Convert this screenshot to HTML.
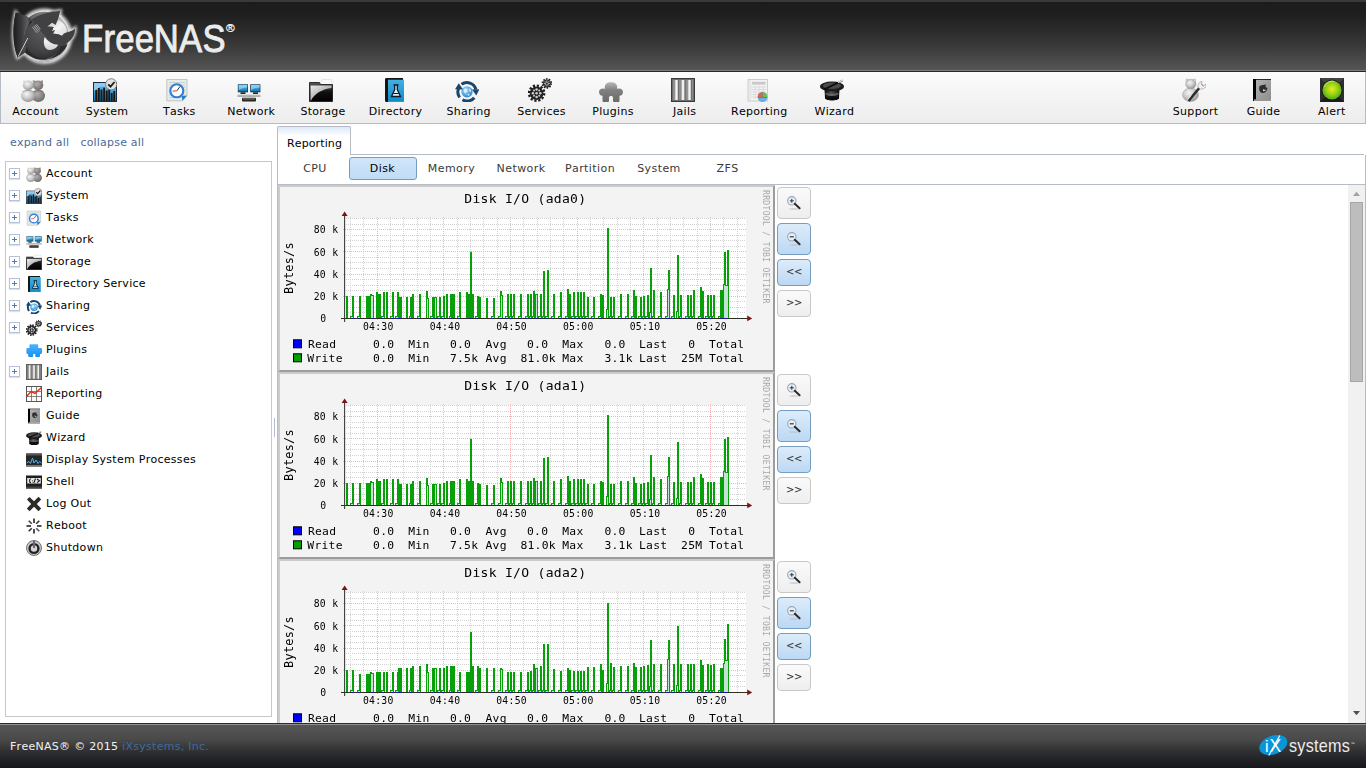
<!DOCTYPE html>
<html lang="en">
<head>
<meta charset="utf-8">
<title>FreeNAS - Reporting</title>
<style>
html,body{margin:0;padding:0;}
body{width:1366px;height:768px;overflow:hidden;background:#fff;position:relative;
 font-family:"DejaVu Sans","Liberation Sans",sans-serif;font-size:11px;color:#000;letter-spacing:0.28px;font-kerning:none;}
.abs{position:absolute;}
#hdr{left:0;top:0;width:1366px;height:70px;background:linear-gradient(#1b1b1b 0,#1f1f1f 22%,#353535 60%,#565555 100%);}
#hdrtop{left:0;top:0;width:1366px;height:2px;background:#3a3a3a;}
#hdrline{left:0;top:70px;width:1366px;height:1px;background:#7c7c7c;}
#hdrline2{left:0;top:71px;width:1366px;height:1px;background:#262626;}
#tb{left:0;top:72px;width:1364px;height:51px;border:1px solid #b5bcc7;border-top:none;background:linear-gradient(#fbfbfb,#f4f4f4 50%,#ededed);}
.tbi{position:absolute;top:72px;height:52px;width:100px;margin-left:-50px;text-align:center;}
.tbi svg{position:absolute;left:50%;margin-left:-12px;top:6px;width:24px;height:24px;}
.tbi span{position:absolute;left:0;width:100px;top:33px;font-size:11px;line-height:14px;color:#000;}
#links{left:10px;top:136px;letter-spacing:0.2px;font-size:11px;line-height:14px;color:#4a6b9a;white-space:pre;}
#tree{left:5px;top:161px;width:265px;height:554px;border:1px solid #c8c8c8;background:#fff;}
.tr{position:absolute;left:0;height:22px;width:260px;}
.tr .ex{position:absolute;left:3px;top:6px;width:9px;height:9px;border:1px solid #b7c2d6;background:#fff;box-shadow:0 1px 1px rgba(120,140,180,.25);}
.tr .ex:before{content:"";position:absolute;left:2px;top:4px;width:5px;height:1px;background:#5b78ad;}
.tr .ex:after{content:"";position:absolute;left:4px;top:2px;width:1px;height:5px;background:#5b78ad;}
.tr svg{position:absolute;left:20px;top:4px;width:16px;height:16px;}
.tr span{position:absolute;left:40px;top:5px;line-height:14px;font-size:11px;white-space:nowrap;}
#split{left:274px;top:418px;width:1px;height:19px;background:#b3bdd1;}
#tabline{left:277px;top:154px;width:1087px;height:1px;background:#b5bcc7;}
#tabbox{left:277px;top:155px;width:1087px;height:568px;border-left:1px solid #b5bcc7;border-right:1px solid #b5bcc7;}
#tab{left:277px;top:126px;width:72px;height:28px;border:1px solid #b5bcc7;border-bottom:none;background:linear-gradient(#dbe9f8 0,#fff 9px);border-radius:2px 2px 0 0;}
#tab span{position:absolute;left:9px;top:10px;line-height:14px;font-size:11px;letter-spacing:0.12px;}
#subline{left:278px;top:184px;width:1087px;height:1px;background:#b5bcc7;}
.st{position:absolute;top:162px;line-height:14px;font-size:11px;letter-spacing:0.42px;color:#3a3a3a;width:80px;margin-left:-40px;text-align:center;}
#disk{left:349px;top:157px;width:66px;height:21px;border:1px solid #759dc0;border-radius:3px;background:linear-gradient(#cfe5fa,#c2dcf5);}
#content{left:278px;top:185px;width:1070px;height:538px;overflow:hidden;background:#fff;}
#sb{left:1348px;top:185px;width:17px;height:538px;background:#f1f1f1;}
#sbthumb{left:1350px;top:202px;width:13px;height:180px;background:#bdbdbd;border:1px solid #a6a6a6;box-sizing:border-box;}
#ftr{left:0;top:725px;width:1366px;height:43px;background:linear-gradient(#565656 0,#4b4a4a 33%,#353536 55%,#212327 80%,#15171b 100%);}
#ftrline{left:0;top:723px;width:1366px;height:1px;background:#2b2b2b;border-bottom:1px solid #8f8f8f;}
#ftrtxt{left:10px;top:739.5px;font-size:11px;line-height:14px;color:#f2f2f2;white-space:pre;}
#ftrtxt b{font-weight:normal;color:#3d6aa0;}
.g{position:absolute;left:0;width:497px;height:187px;will-change:transform;}
.zb{position:absolute;left:499px;width:30px;letter-spacing:-0.3px;border:1px solid #c8c8c8;border-radius:4px;background:linear-gradient(#fafafa,#eee);box-sizing:border-box;text-align:center;font-size:10px;color:#333;}
.zb.sel{border-color:#759dc0;background:linear-gradient(#dcecfa,#bcd8f4);}
</style>
</head>
<body>
<svg width="0" height="0" style="position:absolute">
<defs>
 <radialGradient id="gLt" cx="0.4" cy="0.35" r="0.7"><stop offset="0" stop-color="#f6f6f6"/><stop offset="0.55" stop-color="#c6c6c6"/><stop offset="1" stop-color="#8c8c8c"/></radialGradient>
 <radialGradient id="gDk" cx="0.4" cy="0.35" r="0.7"><stop offset="0" stop-color="#b5b0b0"/><stop offset="0.6" stop-color="#8a8585"/><stop offset="1" stop-color="#6a6666"/></radialGradient>
 <linearGradient id="gBlue" x1="0" y1="0" x2="0" y2="1"><stop offset="0" stop-color="#6fc3ee"/><stop offset="1" stop-color="#0b78b8"/></linearGradient>
 <linearGradient id="gFold" x1="0" y1="0" x2="0" y2="1"><stop offset="0" stop-color="#5a5a5a"/><stop offset="0.5" stop-color="#111"/><stop offset="1" stop-color="#000"/></linearGradient>
 <linearGradient id="gGloss" x1="0" y1="0" x2="1" y2="1"><stop offset="0" stop-color="#f4f4f4"/><stop offset="1" stop-color="#8c8c8c"/></linearGradient>
 <linearGradient id="gPlug" x1="0" y1="0" x2="0" y2="1"><stop offset="0" stop-color="#b8b8b8"/><stop offset="0.4" stop-color="#808080"/><stop offset="1" stop-color="#6a6a6a"/></linearGradient>
 <linearGradient id="gPlugB" x1="0" y1="0" x2="0" y2="1"><stop offset="0" stop-color="#4db4ff"/><stop offset="1" stop-color="#1590f0"/></linearGradient>
 <linearGradient id="gHat" x1="0" y1="0" x2="1" y2="0"><stop offset="0" stop-color="#000"/><stop offset="0.45" stop-color="#555"/><stop offset="1" stop-color="#000"/></linearGradient>
 <radialGradient id="gGrn" cx="0.5" cy="0.45" r="0.55"><stop offset="0" stop-color="#e3ee1c"/><stop offset="0.5" stop-color="#9fd415"/><stop offset="1" stop-color="#4fae12"/></radialGradient>
 <radialGradient id="gGlobe" cx="0.4" cy="0.35" r="0.7"><stop offset="0" stop-color="#a8dcff"/><stop offset="1" stop-color="#1f86d0"/></radialGradient>
 <linearGradient id="gBar" x1="0" y1="0" x2="1" y2="0"><stop offset="0" stop-color="#777"/><stop offset="0.5" stop-color="#f2f2f2"/><stop offset="1" stop-color="#888"/></linearGradient>

 <symbol id="i-account" viewBox="0 0 24 24">
  <ellipse cx="17.300" cy="17.800" rx="6.700" ry="6.200" fill="url(#gDk)"/><ellipse cx="17" cy="7.300" rx="5.300" ry="4.800" fill="url(#gDk)"/><path d="M12,5.500 l0.300,-3.500 l3.200,1.500z M22,5.500 l-0.300,-3.500 l-3.200,1.500z" fill="#8f8989"/>
  <ellipse cx="7" cy="17.800" rx="7" ry="6.200" fill="url(#gLt)"/><ellipse cx="7.300" cy="7.300" rx="5.500" ry="4.800" fill="url(#gLt)"/><path d="M2.200,5.500 l0.300,-3.500 l3.200,1.500z M12.400,5.500 l-0.300,-3.500 l-3.200,1.500z" fill="#d9d9d9"/>
  <path d="M1.500,13.800 C4.500,12 9.500,12 12.500,13.800" stroke="#8f8f8f" stroke-width="0.700" fill="none"/><path d="M12.500,13.800 C15,12.200 19.500,12.200 22.500,13.800" stroke="#6d6868" stroke-width="0.700" fill="none"/>
 </symbol>
 <symbol id="i-system" viewBox="0 0 24 24">
  <rect x="0.500" y="4.500" width="23" height="19" fill="url(#gBlue)" stroke="#1b2a3c" stroke-width="1"/>
  <path d="M1,13 L8,8 L14,10 L23,6 L23,5 L1,5Z" fill="#9fd0f2" opacity="0.800"/>
  <g fill="#1d1512"><rect x="2.300" y="12" width="2" height="11"/><rect x="5" y="10" width="1.800" height="13"/><rect x="7.500" y="11.500" width="2" height="11.500"/><rect x="10.200" y="9.500" width="1.800" height="13.500"/><rect x="12.700" y="12.500" width="2" height="10.500"/><rect x="15.300" y="11" width="1.800" height="12"/><rect x="17.800" y="15" width="1.800" height="8"/><rect x="20.300" y="13" width="1.800" height="10"/></g>
  <circle cx="18.200" cy="6.300" r="5.600" fill="#e2e2e2" stroke="#777" stroke-width="0.900"/>
  <path d="M15.200,6.300 L17.500,8.600 L21.500,4" stroke="#1a1a1a" stroke-width="1.800" fill="none"/>
 </symbol>
 <symbol id="i-tasks" viewBox="0 0 24 24">
  <path d="M1.800,1.500 H22 V18 L17.500,22.800 H1.800Z" fill="#e6ece8" stroke="#b4bcb6" stroke-width="0.800"/>
  <g stroke="#bfc7c1" stroke-width="0.700"><path d="M4,4.500H20M4,7H20M4,9.500H20M4,12H20M4,14.500H20M4,17H20M4,19.500H16"/></g>
  <path d="M22,17.500 L17.500,22.800 L16.500,18Z" fill="#2a7bd0"/>
  <circle cx="11.800" cy="12.800" r="6.500" fill="#fff" stroke="#2f7fd6" stroke-width="2.100"/>
  <path d="M11.800,12.800 L15,8.500" stroke="#333" stroke-width="1"/><path d="M11.800,12.800 L7.500,13.200" stroke="#d33" stroke-width="1"/>
 </symbol>
 <symbol id="i-network" viewBox="0 0 24 24">
  <rect x="0.800" y="6.300" width="10.200" height="8" fill="#16405c"/><rect x="1.600" y="7" width="8.600" height="6.200" fill="url(#gBlue)"/>
  <rect x="13.200" y="6.300" width="10.200" height="8" fill="#16405c"/><rect x="14" y="7" width="8.600" height="6.200" fill="url(#gBlue)"/>
  <path d="M1.600,7 h8.600 v2.500 c-3,0 -6,1 -8.600,2.500z M14,7 h8.600 v2.500 c-3,0 -6,1 -8.600,2.500z" fill="#9ad8f7" opacity="0.700"/>
  <rect x="3.500" y="14.300" width="5" height="1.700" fill="#2a2a2a"/><rect x="16" y="14.300" width="5" height="1.700" fill="#2a2a2a"/>
  <rect x="0.500" y="16.500" width="23" height="1.200" fill="#c9c9c9"/><rect x="0.500" y="17.700" width="23" height="0.800" fill="#6a6a6a"/>
  <rect x="5" y="19.800" width="14" height="3.700" rx="0.800" fill="#262626"/><rect x="6" y="20.500" width="12" height="0.900" fill="#8f8f70"/>
 </symbol>
 <symbol id="i-storage" viewBox="0 0 24 24">
  <path d="M12,5 L13,1.500 H22.500 L23,7 H12Z" fill="#fafafa" stroke="#cfcfcf" stroke-width="0.500"/>
  <path d="M0.500,4.500 H10.500 L11.500,6.500 H23.500 V23.500 H0.500Z" fill="url(#gFold)" stroke="#111" stroke-width="0.800"/>
  <path d="M1.500,7.500 H22.500 V10 C14,11 6,15 2,22.500 H1.500Z" fill="url(#gGloss)" opacity="0.950"/>
 </symbol>
 <symbol id="i-directory" viewBox="0 0 24 24">
  <path d="M3,1.500 C3,0.600 3.600,0 4.500,0 H21 V2 H6 V24 H4.500 C3.600,24 3,23.400 3,22.500Z" fill="#151515"/>
  <rect x="6" y="1.800" width="16" height="22" fill="#159cd6"/><rect x="6" y="1.800" width="16" height="22" fill="url(#gBlue)" opacity="0.500"/>
  <path d="M11.500,7 H16.500 M12.700,7 V11.500 L9.500,18.500 H18.500 L15.300,11.500 V7" stroke="#0c1a24" stroke-width="1.300" fill="#d9f1ff"/>
  <path d="M11.300,15.500 H16.700" stroke="#0c1a24" stroke-width="1"/>
 </symbol>
 <symbol id="i-sharing" viewBox="0 0 24 24">
  <circle cx="12" cy="13.800" r="5.600" fill="url(#gGlobe)"/>
  <path d="M8.800,11.500 c1.500,-1.500 3,-1 3.500,0.500 c0.500,1.500 -1,2 -1.500,3.500 c-1.500,-0.500 -2.500,-2 -2,-4z M14,10.500 c1.500,0.500 2.500,2 2,3.500 c-1,0 -2,-1.500 -2,-3.500z M12.500,16.300 c1,-0.500 2,0 2,1 c-0.800,0.800 -1.800,0.600 -2,-1z" fill="#e8f6ff" opacity="0.850"/>
  <path d="M4.600,19.500 A9.300,9.300 0 0 1 3.600,10.500" stroke="#1b466c" stroke-width="3" fill="none"/>
  <path d="M0,11.300 L3.800,5.300 L8,11.500Z" fill="#1b466c"/>
  <path d="M6.500,6.300 A9.300,9.300 0 0 1 20.900,11.500" stroke="#1b466c" stroke-width="3" fill="none"/>
  <path d="M17,11.500 L24.400,11.200 L21.300,17.600Z" fill="#1b466c"/>
  <path d="M19.300,19.700 A9.300,9.300 0 0 1 7.500,21.800" stroke="#1b466c" stroke-width="3" fill="none"/>
 </symbol>
 <symbol id="i-services" viewBox="0 0 24 24">
  <circle cx="8.600" cy="15.200" r="7.600" fill="none" stroke="#1b1b1b" stroke-width="2.400" stroke-dasharray="2.200 1.779"/>
  <circle cx="8.600" cy="15.200" r="6.800" fill="#222"/>
  <g fill="#cfcfcf"><circle cx="8.600" cy="15.200" r="1.300"/><circle cx="8.600" cy="11.500" r="1.250"/><circle cx="8.600" cy="18.900" r="1.250"/><circle cx="4.900" cy="15.200" r="1.250"/><circle cx="12.300" cy="15.200" r="1.250"/><circle cx="6" cy="12.600" r="1"/><circle cx="11.200" cy="12.600" r="1"/><circle cx="6" cy="17.800" r="1"/><circle cx="11.200" cy="17.800" r="1"/></g>
  <circle cx="18.900" cy="5.400" r="4.500" fill="none" stroke="#1b1b1b" stroke-width="1.600" stroke-dasharray="1.500 1.327"/>
  <circle cx="18.900" cy="5.400" r="4" fill="#2a2a2a"/>
  <g stroke="#d6d6d6" stroke-width="0.850"><path d="M18.900,2.400V8.400M15.900,5.400H21.900M16.800,3.300L21,7.500M21,3.300L16.800,7.500"/></g>
  <circle cx="18.900" cy="5.400" r="1" fill="#2a2a2a"/>
 </symbol>
 <symbol id="i-plugins" viewBox="0 0 24 24">
  <path d="M6,11 C5,6 8,4.200 12,4.200 C16,4.200 19,6 18,11 C21,9.800 24,11 24,14 C24,17 21.500,18 20.500,17.800 V22.500 C20.500,23.500 20,24 19,24 H15.500 C14.500,24 14,23.500 14,22.500 V19.500 C14,17.500 10,17.500 10,19.500 V22.500 C10,23.500 9.500,24 8.500,24 H5 C4,24 3.500,23.500 3.500,22.500 V17.800 C2.500,18 0,17 0,14 C0,11 3,9.800 6,11Z" fill="url(#gPlug)"/>
 </symbol>
 <symbol id="i-pluginsb" viewBox="0 0 16 16">
  <path d="M4.400,2.300 H11.200 Q12.200,2.300 12.200,3.300 V6.100 H14.800 Q16,6.100 16,7.300 V10.800 Q16,12 14.800,12 H14 V14 Q14,15 13,15 H10.200 Q9.200,15 9.200,14 V12 H7.200 V14 Q7.200,15 6.200,15 H3.200 Q2.200,15 2.200,14 V12 H1.600 Q0.400,12 0.400,10.800 V7.300 Q0.400,6.100 1.600,6.100 H3.400 V3.300 Q3.400,2.300 4.400,2.300Z" fill="url(#gPlugB)"/>
 </symbol>
 <symbol id="i-jails" viewBox="0 0 24 24">
  <rect x="0.500" y="0.500" width="23" height="23" fill="#8c8c8c" stroke="#3a3a3a" stroke-width="1"/>
  <rect x="1.500" y="1.500" width="21" height="21" fill="none" stroke="#6d6d6d" stroke-width="1"/>
  <rect x="3.800" y="2" width="3.400" height="20" fill="#b9b9b9"/><rect x="4.600" y="2" width="1.800" height="20" fill="#f6f6f6"/>
  <rect x="10.300" y="2" width="3.400" height="20" fill="#b9b9b9"/><rect x="11.100" y="2" width="1.800" height="20" fill="#f6f6f6"/>
  <rect x="16.800" y="2" width="3.400" height="20" fill="#b9b9b9"/><rect x="17.600" y="2" width="1.800" height="20" fill="#f6f6f6"/>
  <rect x="7.200" y="2" width="0.800" height="20" fill="#666"/><rect x="13.700" y="2" width="0.800" height="20" fill="#666"/><rect x="20.200" y="2" width="0.800" height="20" fill="#666"/>
 </symbol>
 <symbol id="i-reporting" viewBox="0 0 24 24">
  <rect x="3" y="1.500" width="19.500" height="21.500" fill="#f2f2f2" stroke="#c4c4c4" stroke-width="0.800"/>
  <rect x="7" y="3.800" width="13.500" height="2.800" fill="#c9c9c9"/>
  <g stroke="#d4d4d4" stroke-width="0.700"><path d="M6,9H21M6,11.500H21M6,14H21M6,16.500H21M6,19H21M10,8V21M14,8V21M18,8V21M5,2V22.500"/></g>
  <circle cx="17.500" cy="19" r="4.800" fill="#2a8be0"/>
  <path d="M17.500,19 L17.500,14.200 A4.800,4.800 0 0 1 22.300,19Z" fill="#6cc04a"/>
  <path d="M17.500,19 L12.700,19 A4.800,4.800 0 0 1 17.500,14.200Z" fill="#e8623a"/>
  <path d="M12.900,20 A4.800,4.800 0 0 0 22.100,20Z" fill="#8ec9f5" opacity="0.600"/>
 </symbol>
 <symbol id="i-wizard" viewBox="0 0 24 24">
  <path d="M4.500,10 L5,20 C7,23 17,23 19,20 L19.500,10Z" fill="url(#gHat)"/>
  <ellipse cx="12" cy="20.300" rx="7" ry="2.200" fill="#0c0c0c"/>
  <ellipse cx="12" cy="8.500" rx="12" ry="5" fill="#1c1c1c"/>
  <ellipse cx="12" cy="7.800" rx="9" ry="3.200" fill="#4a4a4a"/>
  <path d="M4,11.500 L22.500,2.500" stroke="#0a0a0a" stroke-width="1.800"/><path d="M18,4.500 L23.300,1.900" stroke="#e0e0e0" stroke-width="1.500"/>
  <path d="M5.500,14.500 C9,16.200 15,16.200 18.500,14.500 V16.500 C15,18.200 9,18.200 5.500,16.500Z" fill="#777" opacity="0.700"/>
 </symbol>
 <symbol id="i-support" viewBox="0 0 24 24">
  <ellipse cx="8.500" cy="16.800" rx="8" ry="6.800" fill="url(#gLt)" stroke="#9a9a9a" stroke-width="0.500"/><ellipse cx="8.800" cy="6" rx="5.200" ry="4.800" fill="url(#gLt)" stroke="#9a9a9a" stroke-width="0.500"/>
  <path d="M4,4 l0.300,-3.200 l3,1.400z M13.600,4 l-0.300,-3.200 l-3,1.400z" fill="#cfcfcf" stroke="#9a9a9a" stroke-width="0.400"/>
  <path d="M6.500,23 L18.500,8.500" stroke="#2b2b2b" stroke-width="2.600"/>
  <path d="M16.500,10 C15,7 17,4 20,3.500 L19.500,6.300 L21.500,7.800 L24,6 C24.500,9.500 21.500,11.500 18.500,11Z" fill="#f1f1f1" stroke="#8d8d8d" stroke-width="0.600"/>
  <path d="M19.500,6.300 L21.500,7.800" stroke="#c33" stroke-width="0.800"/>
  <path d="M5,22.500 L9,17.500" stroke="#fff" stroke-width="0.800"/>
 </symbol>
 <symbol id="i-guide" viewBox="0 0 24 24">
  <rect x="3" y="1" width="18" height="22" fill="#000"/>
  <rect x="6" y="1.800" width="15" height="19.700" fill="#8e8e8e"/><rect x="6" y="1.800" width="15" height="19.700" fill="url(#gGloss)" opacity="0.350"/>
  <rect x="4" y="21.500" width="17" height="1.200" fill="#d8d8d8"/>
  <path d="M9.500,8 C11,7 14,7 16,6.500 L15.500,9 L17.500,10 C17,13 15,15 12.500,15 C10,15 8.500,12 9.500,8Z" fill="#2e2e2e"/>
  <path d="M13,11 C14,12 15,12 16,11.500 C15.500,13 14,13.500 13,13Z" fill="#ddd"/>
 </symbol>
 <symbol id="i-alert" viewBox="0 0 24 24">
  <rect x="0" y="0" width="24" height="24" fill="#2e2e2e"/>
  <path d="M0,0 H24 L20,4 H4Z" fill="#444"/><path d="M0,24 H24 L20,20 H4Z" fill="#1c1c1c"/>
  <circle cx="12" cy="12" r="10.300" fill="#151515"/>
  <circle cx="12" cy="12" r="9.600" fill="url(#gGrn)"/>
  <path d="M4.500,9 C6,4.500 10,2.800 14,3.300" stroke="#e6f5a0" stroke-width="1" fill="none" opacity="0.700"/>
 </symbol>
 <symbol id="i-report2" viewBox="0 0 16 16">
  <rect x="0.500" y="0.500" width="15" height="15" fill="#fdfdfd" stroke="#555" stroke-width="1"/>
  <g stroke="#666" stroke-width="0.800"><path d="M0.500,5.500H15.500M0.500,10.500H15.500M5.500,0.500V15.500M10.500,0.500V15.500"/></g>
  <path d="M0.500,10.500 L5,5.500 L9,7.500 L15.500,1.500" stroke="#e02b10" stroke-width="1.400" fill="none"/>
 </symbol>
 <symbol id="i-procs" viewBox="0 0 16 16">
  <rect x="0" y="1.500" width="16" height="13" fill="#262626"/><rect x="0" y="1.500" width="16" height="2" fill="#555"/>
  <path d="M0.500,11 L3,9.500 L4.500,11.500 L6.500,6 L8,11 L10,8 L12,11.500 L13.500,9.500 L15.500,11" stroke="#53b4f0" stroke-width="1" fill="none"/>
  <rect x="0" y="13" width="16" height="1.500" fill="#777"/>
 </symbol>
 <symbol id="i-shell" viewBox="0 0 16 16">
  <rect x="0" y="1.500" width="16" height="13" fill="#1e1e1e"/>
  <rect x="1.200" y="4" width="13.600" height="5.500" fill="#e6e6e6"/>
  <path d="M5,4.800 C3,4.800 3,8.700 5,8.700 M6.500,6 V6.600 M6.500,7.700 V8.300 M9.500,4.500 L7.800,9 M11,5 L13.500,6.800 L11,8.600" stroke="#1e1e1e" stroke-width="1.100" fill="none"/>
  <rect x="0" y="12.500" width="16" height="2" fill="#444"/>
 </symbol>
 <symbol id="i-logout" viewBox="0 0 16 16">
  <path d="M1,3.500 L3.500,1 L8,5.200 L12.500,0.800 L15.200,3.500 L10.800,8 L15.200,12.500 L12.500,15.200 L8,10.800 L3.500,15.200 L0.800,12.500 L5.200,8Z" fill="#2b2b2b"/>
 </symbol>
 <symbol id="i-reboot" viewBox="0 0 16 16">
  <g stroke-width="1.600" stroke-linecap="butt"><path d="M8,0.500V5" stroke="#222"/><path d="M13.300,2.700L10.200,5.800" stroke="#333"/><path d="M15.500,8H11" stroke="#222"/><path d="M13.300,13.300L10.200,10.200" stroke="#555"/><path d="M8,15.500V11" stroke="#222"/><path d="M2.700,13.300L5.800,10.200" stroke="#333"/><path d="M0.500,8H5" stroke="#222"/><path d="M2.700,2.700L5.800,5.800" stroke="#444"/></g>
 </symbol>
 <symbol id="i-shutdown" viewBox="0 0 16 16">
  <circle cx="8" cy="8" r="7.500" fill="#c9c9c9" stroke="#555" stroke-width="0.800"/>
  <circle cx="8" cy="8.500" r="5.600" fill="#222"/>
  <circle cx="8" cy="8.500" r="3.200" fill="#d6d6d6"/>
  <rect x="7" y="1.800" width="2" height="6" fill="#d6d6d6"/><rect x="7.400" y="1" width="1.200" height="7" fill="#222"/>
 </symbol>
</defs>
</svg>
<div id="hdr" class="abs"></div><div id="hdrtop" class="abs"></div><div id="hdrline" class="abs"></div><div id="hdrline2" class="abs"></div>
<svg class="abs" style="left:0;top:0" width="260" height="72" viewBox="0 0 260 72">
 <defs>
  <radialGradient id="lgSph" cx="0.68" cy="0.38" r="0.6">
   <stop offset="0" stop-color="#fafafa"/><stop offset="0.3" stop-color="#cfcfcf"/><stop offset="0.65" stop-color="#808083"/><stop offset="1" stop-color="#4a4a4c"/>
  </radialGradient>
  <radialGradient id="lgBody" cx="0.45" cy="0.35" r="0.7">
   <stop offset="0" stop-color="#5a5a5d"/><stop offset="0.7" stop-color="#424245"/><stop offset="1" stop-color="#2c2c2e"/>
  </radialGradient>
  <linearGradient id="lgBelly" x1="0" y1="0" x2="0" y2="1"><stop offset="0" stop-color="#ffffff"/><stop offset="1" stop-color="#cfcfcf"/></linearGradient>
  <linearGradient id="lgFin" x1="0" y1="0" x2="1" y2="0"><stop offset="0" stop-color="#1c1c1e"/><stop offset="0.45" stop-color="#3a3a3c"/><stop offset="0.8" stop-color="#5c5c5f"/><stop offset="1" stop-color="#2a2a2c"/></linearGradient>
  <linearGradient id="lgMouth" x1="0" y1="0" x2="1" y2="1"><stop offset="0" stop-color="#b9b9b9"/><stop offset="0.5" stop-color="#f4f4f4"/><stop offset="1" stop-color="#d8d8d8"/></linearGradient>
  <filter id="lgGlow" x="-30%" y="-30%" width="160%" height="160%"><feGaussianBlur stdDeviation="1.6"/></filter>
 </defs>
 <g filter="url(#lgGlow)" opacity="0.9">
  <circle cx="44.500" cy="36.200" r="26" fill="none" stroke="#fff" stroke-width="3.200"/>
  <path d="M15.700,12.500 C12.500,26 12.500,44 17.600,57.600 L24.500,52 C21,44 21,28 31,19.500 C38,14 50,11.500 60.400,10.700 L57.700,20 C62,24 64,29 66.500,32.500 C70,31.500 73.500,30 75,28.400 C75.500,35 71,41 66,43.500 L67,45.500 C60,56 50,59 45,59Z" fill="none" stroke="#fff" stroke-width="3"/>
 </g>
 <circle cx="44.500" cy="36.200" r="25.500" fill="url(#lgSph)"/>
 <circle cx="44.500" cy="36.200" r="25" fill="none" stroke="#f0f0f0" stroke-width="1.200" opacity="0.850"/>
 <path d="M15.700,12.500 C12.500,26 12.500,44 17.600,57.600 L25,52.500 C31,58 40,60.500 47,59.500 L47,50 L31,19.500 C26,15.500 21,13.500 15.700,12.500Z" fill="#29292b"/>
 <path d="M15.700,12.500 C12.500,26 12.500,44 17.600,57.600 L25,52.500 L28,40 L27,28 L31,19.500 C26,15.500 21,13.500 15.700,12.500Z" fill="url(#lgFin)"/>
 <circle cx="44" cy="38.200" r="20" fill="url(#lgBody)"/>
 <path d="M24.300,35 C25,28 27.500,23 31,19.500" stroke="#6a6a6d" stroke-width="0.800" fill="none" opacity="0.700"/>
 <path d="M57.700,20 L55.500,24.800 L52,22.500 L47.200,26.600 L53.600,27 L51.800,31.200 L55,30 L52.700,33.900 C57,33.500 60,35 62,36 L64,33.500 L66.500,32.500 C68,29 64,22 57.700,20Z" fill="url(#lgMouth)"/>
 <path d="M31,19.500 C38,14 50,11.500 60.400,10.700 L57.700,20 L55.500,24.800 L52,22.500 L47.200,26.600 L53.600,27 L51.800,31.200 L55,30 L52.700,33.900 C57,33.500 60,35 62,36 L64,33.500 L66.500,32.500 C70,31.500 73.500,30 75,28.400 C75.500,35 71,41 66,43.500 L67.200,45 C63,47 58,46.500 54,44 C46,38 38,28 31,19.500Z" fill="#414144"/>
 <path d="M31,19.500 C38,14 50,11.500 60.400,10.700" stroke="#6e6e72" stroke-width="0.700" fill="none"/>
 <path d="M67.200,45 C64,52 57,57.500 49,59 C57,55 60,50 60.500,46.500Z" fill="#2c2c2e"/>
 <path d="M44.800,37 C48,42 53,44.500 58.200,44.800 C56.500,48.500 53,50.300 49,49.900 C44.500,49.300 42.500,43 44.800,37Z" fill="url(#lgBelly)"/>
 <path d="M27.800,38 L18.200,56.600" stroke="#dcdcdc" stroke-width="0.900" fill="none"/>
 <path d="M27,56 C32,59.500 40,61 47,60 C52,59.300 56,57.800 59,55.500" stroke="#d0d0d0" stroke-width="1" fill="none" opacity="0.850"/>
 <g stroke="#c4c4c4" stroke-width="0.700" fill="none"><path d="M32.400,27 L37,32.800"/><path d="M33.800,26 L38.400,31.800"/><path d="M35.200,25 L39.600,30.600"/><path d="M36.500,24.200 L40.400,29.300"/></g>
 <g font-family="'Liberation Sans','DejaVu Sans',sans-serif" fill="#ececec" stroke="#ececec">
 <text x="82" y="52" font-size="39.500" stroke-width="0.900" textLength="72.400" lengthAdjust="spacingAndGlyphs">Free</text>
 <text x="153.800" y="52" font-size="39.500" stroke-width="0.900" textLength="72" lengthAdjust="spacingAndGlyphs">NAS</text>
 <text x="226" y="32.400" font-size="11.800" stroke-width="0.300">®</text>
 </g>
</svg>
<div id="tb" class="abs"></div>
<div class="tbi" style="left:35.5px"><svg style="margin-left:-15px"><use href="#i-account"/></svg><span>Account</span></div>
<div class="tbi" style="left:107px"><svg style="margin-left:-14px"><use href="#i-system"/></svg><span>System</span></div>
<div class="tbi" style="left:179.3px"><svg style="margin-left:-14px"><use href="#i-tasks"/></svg><span>Tasks</span></div>
<div class="tbi" style="left:251.2px"><svg style="margin-left:-14px"><use href="#i-network"/></svg><span>Network</span></div>
<div class="tbi" style="left:323px"><svg style="margin-left:-14px"><use href="#i-storage"/></svg><span>Storage</span></div>
<div class="tbi" style="left:395.5px"><svg style="margin-left:-14px"><use href="#i-directory"/></svg><span>Directory</span></div>
<div class="tbi" style="left:468.7px"><svg style="margin-left:-14px"><use href="#i-sharing"/></svg><span>Sharing</span></div>
<div class="tbi" style="left:541.5px"><svg style="margin-left:-14px"><use href="#i-services"/></svg><span>Services</span></div>
<div class="tbi" style="left:613px"><svg style="margin-left:-14px"><use href="#i-plugins"/></svg><span>Plugins</span></div>
<div class="tbi" style="left:684.7px"><svg style="margin-left:-14px"><use href="#i-jails"/></svg><span>Jails</span></div>
<div class="tbi" style="left:759.3px"><svg style="margin-left:-14px"><use href="#i-reporting"/></svg><span>Reporting</span></div>
<div class="tbi" style="left:834.4px"><svg style="margin-left:-14px"><use href="#i-wizard"/></svg><span>Wizard</span></div>
<div class="tbi" style="left:1195.6px"><svg style="margin-left:-14px"><use href="#i-support"/></svg><span>Support</span></div>
<div class="tbi" style="left:1263.5px"><svg style="margin-left:-14px"><use href="#i-guide"/></svg><span>Guide</span></div>
<div class="tbi" style="left:1331.8px"><svg style="margin-left:-12.3px"><use href="#i-alert"/></svg><span>Alert</span></div>
<div id="links" class="abs">expand all   collapse all</div>
<div id="tree" class="abs">
<div class="tr" style="top:0px"><i class="ex"></i><svg><use href="#i-account"/></svg><span>Account</span></div>
<div class="tr" style="top:22px"><i class="ex"></i><svg><use href="#i-system"/></svg><span>System</span></div>
<div class="tr" style="top:44px"><i class="ex"></i><svg><use href="#i-tasks"/></svg><span>Tasks</span></div>
<div class="tr" style="top:66px"><i class="ex"></i><svg><use href="#i-network"/></svg><span>Network</span></div>
<div class="tr" style="top:88px"><i class="ex"></i><svg><use href="#i-storage"/></svg><span>Storage</span></div>
<div class="tr" style="top:110px"><i class="ex"></i><svg><use href="#i-directory"/></svg><span>Directory Service</span></div>
<div class="tr" style="top:132px"><i class="ex"></i><svg><use href="#i-sharing"/></svg><span>Sharing</span></div>
<div class="tr" style="top:154px"><i class="ex"></i><svg><use href="#i-services"/></svg><span>Services</span></div>
<div class="tr" style="top:176px"><svg><use href="#i-pluginsb"/></svg><span>Plugins</span></div>
<div class="tr" style="top:198px"><i class="ex"></i><svg><use href="#i-jails"/></svg><span>Jails</span></div>
<div class="tr" style="top:220px"><svg><use href="#i-report2"/></svg><span>Reporting</span></div>
<div class="tr" style="top:242px"><svg><use href="#i-guide"/></svg><span>Guide</span></div>
<div class="tr" style="top:264px"><svg><use href="#i-wizard"/></svg><span>Wizard</span></div>
<div class="tr" style="top:286px"><svg><use href="#i-procs"/></svg><span>Display System Processes</span></div>
<div class="tr" style="top:308px"><svg><use href="#i-shell"/></svg><span>Shell</span></div>
<div class="tr" style="top:330px"><svg><use href="#i-logout"/></svg><span>Log Out</span></div>
<div class="tr" style="top:352px"><svg><use href="#i-reboot"/></svg><span>Reboot</span></div>
<div class="tr" style="top:374px"><svg><use href="#i-shutdown"/></svg><span>Shutdown</span></div>
</div>
<div id="split" class="abs"></div>
<div id="tabline" class="abs"></div><div id="tabbox" class="abs"></div>
<div id="tab" class="abs"><span>Reporting</span></div>
<div id="disk" class="abs"></div>
<div class="st" style="left:315px">CPU</div>
<div class="st" style="left:382.5px;color:#000">Disk</div>
<div class="st" style="left:451.5px">Memory</div>
<div class="st" style="left:521px">Network</div>
<div class="st" style="left:590px">Partition</div>
<div class="st" style="left:659px">System</div>
<div class="st" style="left:727.5px">ZFS</div>
<div id="subline" class="abs"></div>
<div id="content" class="abs">
<svg class="g" style="top:0px" width="497" height="187" viewBox="0 0 497 187">
<rect x="0" y="0" width="497" height="187" fill="#f3f3f3"/>
<path d="M0,0H497V2H2V187H0Z" fill="#cbcbcb"/><path d="M497,0V187H0L2,185H495V2Z" fill="#9c9c9c"/>
<rect x="67" y="33" width="401" height="100" fill="#fff"/>
<path d="M72.5,32V134M85.5,32V134M112.5,32V134M125.5,32V134M139.5,32V134M152.5,32V134M179.5,32V134M192.5,32V134M205.5,32V134M219.5,32V134M245.5,32V134M259.5,32V134M272.5,32V134M285.5,32V134M312.5,32V134M325.5,32V134M339.5,32V134M352.5,32V134M379.5,32V134M392.5,32V134M405.5,32V134M419.5,32V134M445.5,32V134M459.5,32V134M66,127.5H468M66,122.5H468M66,116.5H468M66,105.5H468M66,100.5H468M66,94.5H468M66,83.5H468M66,77.5H468M66,72.5H468M66,61.5H468M66,55.5H468M66,50.5H468M66,39.5H468M66,33.5H468" stroke="#d2d2d2" stroke-width="1" stroke-dasharray="1 1" fill="none" shape-rendering="crispEdges"/>
<path d="M99.5,32V135M165.5,32V135M232.5,32V135M299.5,32V135M365.5,32V135M432.5,32V135M65,111.5H468M65,89.5H468M65,66.5H468M65,44.5H468" stroke="#f2b6b6" stroke-width="1" stroke-dasharray="1 1" fill="none" shape-rendering="crispEdges"/>
<path d="M67.5,133.5H68.5V111.5H69.5V133.5H72.5V131.5H74.5V111.5H75.5V133.5H79.5V131.5H81.5V111.5H82.5V133.5H88.5V111.5H89.5V133.5H90.5V111.5H91.5V133.5H92.5V109.5H93.5V110.5H95.5V133.5H98.5V107.5H99.5V133.5H100.5V109.5H102.5V133.5H103.5V131.5H105.5V107.5H106.5V133.5H108.5V107.5H109.5V133.5H112.5V131.5H114.5V107.5H115.5V133.5H117.5V131.5H119.5V107.5H120.5V112.5H123.5V133.5H128.5V112.5H129.5V133.5H131.5V131.5H132.5V112.5H133.5V133.5H134.5V109.5H135.5V133.5H139.5V131.5H141.5V109.5H142.5V133.5H148.5V106.5H149.5V113.5H150.5V133.5H152.5V131.5H154.5V112.5H155.5V133.5H156.5V112.5H158.5V133.5H159.5V131.5H161.5V112.5H162.5V133.5H163.5V131.5H165.5V111.5H166.5V133.5H168.5V109.5H169.5V133.5H171.5V131.5H172.5V109.5H173.5V133.5H174.5V109.5H176.5V133.5H179.5V131.5H181.5V107.5H182.5V133.5H188.5V107.5H189.5V133.5H190.5V109.5H192.5V67.5H193.5V133.5H194.5V109.5H195.5V133.5H197.5V131.5H199.5V111.5H200.5V133.5H201.5V112.5H202.5V133.5H208.5V113.5H209.5V133.5H213.5V131.5H215.5V113.5H216.5V133.5H220.5V131.5H222.5V106.5H223.5V110.5H224.5V133.5H227.5V131.5H229.5V109.5H230.5V133.5H231.5V131.5H232.5V109.5H233.5V133.5H234.5V131.5H235.5V109.5H236.5V133.5H240.5V131.5H242.5V109.5H243.5V133.5H247.5V131.5H249.5V109.5H250.5V133.5H251.5V131.5H252.5V109.5H253.5V133.5H254.5V131.5H255.5V106.5H256.5V133.5H257.5V109.5H259.5V133.5H260.5V131.5H262.5V109.5H263.5V133.5H264.5V131.5H265.5V86.5H266.5V133.5H267.5V131.5H269.5V85.5H270.5V133.5H273.5V131.5H275.5V109.5H276.5V133.5H280.5V131.5H282.5V107.5H283.5V133.5H287.5V131.5H289.5V104.5H290.5V133.5H291.5V109.5H292.5V133.5H293.5V131.5H295.5V107.5H296.5V133.5H297.5V131.5H299.5V107.5H300.5V133.5H301.5V131.5H302.5V107.5H303.5V133.5H304.5V131.5H305.5V107.5H306.5V133.5H307.5V131.5H309.5V112.5H310.5V133.5H313.5V131.5H315.5V112.5H316.5V133.5H320.5V131.5H322.5V109.5H323.5V133.5H324.5V110.5H325.5V133.5H328.5V124.5H329.5V43.5H330.5V133.5H331.5V131.5H332.5V112.5H333.5V133.5H334.5V131.5H335.5V112.5H336.5V133.5H340.5V131.5H342.5V109.5H343.5V133.5H347.5V131.5H349.5V109.5H350.5V133.5H353.5V131.5H355.5V105.5H356.5V133.5H357.5V111.5H358.5V133.5H360.5V131.5H362.5V112.5H363.5V133.5H364.5V131.5H365.5V111.5H366.5V133.5H367.5V131.5H369.5V110.5H370.5V133.5H371.5V127.5H372.5V83.5H373.5V133.5H374.5V131.5H375.5V105.5H376.5V133.5H380.5V131.5H382.5V107.5H383.5V133.5H387.5V131.5H389.5V104.5H390.5V85.5H391.5V133.5H393.5V131.5H395.5V110.5H396.5V133.5H398.5V126.5H399.5V70.5H400.5V133.5H401.5V131.5H402.5V110.5H403.5V133.5H407.5V131.5H409.5V110.5H410.5V133.5H411.5V131.5H412.5V110.5H413.5V133.5H414.5V131.5H415.5V105.5H416.5V133.5H420.5V131.5H422.5V102.5H423.5V133.5H424.5V106.5H425.5V133.5H427.5V131.5H429.5V110.5H430.5V133.5H431.5V131.5H432.5V110.5H433.5V133.5H434.5V131.5H435.5V110.5H436.5V133.5H440.5V131.5H442.5V105.5H444.5V133.5H445.5V99.5H446.5V67.5H447.5V100.5H449.5V65.5H450.5V133.5H451.5V134H67.5Z" fill="#bfe0cf" opacity="0.9"/>
<path d="M100,109 H103 V134 H100 ZM120,112 H124 V134 H120 ZM174,109 H177 V134 H174 ZM190,109 H193 V134 H190 ZM442,105 H445 V134 H442 Z" fill="#08a008" shape-rendering="crispEdges"/>
<path d="M67.5,133.5H68.5V111.5H69.5V133.5H72.5V131.5H74.5V111.5H75.5V133.5H79.5V131.5H81.5V111.5H82.5V133.5H88.5V111.5H89.5V133.5H90.5V111.5H91.5V133.5H92.5V109.5H93.5V110.5H95.5V133.5H98.5V107.5H99.5V133.5H100.5V109.5H102.5V133.5H103.5V131.5H105.5V107.5H106.5V133.5H108.5V107.5H109.5V133.5H112.5V131.5H114.5V107.5H115.5V133.5H117.5V131.5H119.5V107.5H120.5V112.5H123.5V133.5H128.5V112.5H129.5V133.5H131.5V131.5H132.5V112.5H133.5V133.5H134.5V109.5H135.5V133.5H139.5V131.5H141.5V109.5H142.5V133.5H148.5V106.5H149.5V113.5H150.5V133.5H152.5V131.5H154.5V112.5H155.5V133.5H156.5V112.5H158.5V133.5H159.5V131.5H161.5V112.5H162.5V133.5H163.5V131.5H165.5V111.5H166.5V133.5H168.5V109.5H169.5V133.5H171.5V131.5H172.5V109.5H173.5V133.5H174.5V109.5H176.5V133.5H179.5V131.5H181.5V107.5H182.5V133.5H188.5V107.5H189.5V133.5H190.5V109.5H192.5V67.5H193.5V133.5H194.5V109.5H195.5V133.5H197.5V131.5H199.5V111.5H200.5V133.5H201.5V112.5H202.5V133.5H208.5V113.5H209.5V133.5H213.5V131.5H215.5V113.5H216.5V133.5H220.5V131.5H222.5V106.5H223.5V110.5H224.5V133.5H227.5V131.5H229.5V109.5H230.5V133.5H231.5V131.5H232.5V109.5H233.5V133.5H234.5V131.5H235.5V109.5H236.5V133.5H240.5V131.5H242.5V109.5H243.5V133.5H247.5V131.5H249.5V109.5H250.5V133.5H251.5V131.5H252.5V109.5H253.5V133.5H254.5V131.5H255.5V106.5H256.5V133.5H257.5V109.5H259.5V133.5H260.5V131.5H262.5V109.5H263.5V133.5H264.5V131.5H265.5V86.5H266.5V133.5H267.5V131.5H269.5V85.5H270.5V133.5H273.5V131.5H275.5V109.5H276.5V133.5H280.5V131.5H282.5V107.5H283.5V133.5H287.5V131.5H289.5V104.5H290.5V133.5H291.5V109.5H292.5V133.5H293.5V131.5H295.5V107.5H296.5V133.5H297.5V131.5H299.5V107.5H300.5V133.5H301.5V131.5H302.5V107.5H303.5V133.5H304.5V131.5H305.5V107.5H306.5V133.5H307.5V131.5H309.5V112.5H310.5V133.5H313.5V131.5H315.5V112.5H316.5V133.5H320.5V131.5H322.5V109.5H323.5V133.5H324.5V110.5H325.5V133.5H328.5V124.5H329.5V43.5H330.5V133.5H331.5V131.5H332.5V112.5H333.5V133.5H334.5V131.5H335.5V112.5H336.5V133.5H340.5V131.5H342.5V109.5H343.5V133.5H347.5V131.5H349.5V109.5H350.5V133.5H353.5V131.5H355.5V105.5H356.5V133.5H357.5V111.5H358.5V133.5H360.5V131.5H362.5V112.5H363.5V133.5H364.5V131.5H365.5V111.5H366.5V133.5H367.5V131.5H369.5V110.5H370.5V133.5H371.5V127.5H372.5V83.5H373.5V133.5H374.5V131.5H375.5V105.5H376.5V133.5H380.5V131.5H382.5V107.5H383.5V133.5H387.5V131.5H389.5V104.5H390.5V85.5H391.5V133.5H393.5V131.5H395.5V110.5H396.5V133.5H398.5V126.5H399.5V70.5H400.5V133.5H401.5V131.5H402.5V110.5H403.5V133.5H407.5V131.5H409.5V110.5H410.5V133.5H411.5V131.5H412.5V110.5H413.5V133.5H414.5V131.5H415.5V105.5H416.5V133.5H420.5V131.5H422.5V102.5H423.5V133.5H424.5V106.5H425.5V133.5H427.5V131.5H429.5V110.5H430.5V133.5H431.5V131.5H432.5V110.5H433.5V133.5H434.5V131.5H435.5V110.5H436.5V133.5H440.5V131.5H442.5V105.5H444.5V133.5H445.5V99.5H446.5V67.5H447.5V100.5H449.5V65.5H450.5V133.5H451.5" fill="none" stroke="#08a008" stroke-width="1" stroke-linejoin="miter" shape-rendering="crispEdges"/>
<path d="M63,133.5H470" stroke="#2e2e22" stroke-width="1" shape-rendering="crispEdges"/><path d="M66.6,137V31" stroke="#3c3c3c" stroke-width="1.1"/>
<path d="M66.6,26.4 l-3,4.600 h6z" fill="#7d1414"/><path d="M474.2,133.4 l-5,-2.900 v5.800z" fill="#7d1414"/>
<path d="M69,133.5H69M73,133.5H75M80,133.5H82M89,133.5H89M91,133.5H91M93,133.5H95M99,133.5H99M101,133.5H102M104,133.5H106M109,133.5H109M113,133.5H115M118,133.5H123M129,133.5H129M132,133.5H133M135,133.5H135M140,133.5H142M149,133.5H150M153,133.5H155M157,133.5H158M160,133.5H162M164,133.5H166M169,133.5H169M172,133.5H173M175,133.5H176M180,133.5H182M189,133.5H189M191,133.5H193M195,133.5H195M198,133.5H200M202,133.5H202M209,133.5H209M214,133.5H216M221,133.5H224M228,133.5H230M232,133.5H233M235,133.5H236M241,133.5H243M248,133.5H250M252,133.5H253M255,133.5H256M258,133.5H259M261,133.5H263M265,133.5H266M268,133.5H270M274,133.5H276M281,133.5H283M288,133.5H290M292,133.5H292M294,133.5H296M298,133.5H300M302,133.5H303M305,133.5H306M308,133.5H310M314,133.5H316M321,133.5H323M325,133.5H325M329,133.5H330M332,133.5H333M335,133.5H336M341,133.5H343M348,133.5H350M354,133.5H356M358,133.5H358M361,133.5H363M365,133.5H366M368,133.5H370M372,133.5H373M375,133.5H376M381,133.5H383M388,133.5H391M394,133.5H396M399,133.5H400M402,133.5H403M408,133.5H410M412,133.5H413M415,133.5H416M421,133.5H423M425,133.5H425M428,133.5H430M432,133.5H433M435,133.5H436M441,133.5H444M446,133.5H450" stroke="#1414b8" stroke-width="1" fill="none" shape-rendering="crispEdges"/>
<g font-family="'DejaVu Sans Mono','Liberation Mono',monospace" fill="#000">
<text x="247.300" y="18" font-size="13.050" text-anchor="middle">Disk I/O (ada0)</text>
<g font-size="9.750"><text x="60.300" y="115.1" text-anchor="end">20 k</text><text x="60.300" y="92.9" text-anchor="end">40 k</text><text x="60.300" y="70.6" text-anchor="end">60 k</text><text x="60.300" y="48.4" text-anchor="end">80 k</text><text x="42.300" y="137.3">0</text><text x="100.3" y="144.600" text-anchor="middle">04:30</text><text x="167.0" y="144.600" text-anchor="middle">04:40</text><text x="233.6" y="144.600" text-anchor="middle">04:50</text><text x="300.3" y="144.600" text-anchor="middle">05:00</text><text x="367.0" y="144.600" text-anchor="middle">05:10</text><text x="433.6" y="144.600" text-anchor="middle">05:20</text></g>
<text font-size="11.850" text-anchor="middle" transform="translate(14.600,83) rotate(-90)">Bytes/s</text>
<text font-size="8.150" fill="#a8a8a8" transform="translate(484.500,5) rotate(90)">RRDTOOL / TOBI OETIKER</text>
<g font-size="11.330"><text x="29.9" y="162.7">Read</text><text x="95.1" y="162.7">0.0</text><text x="130.2" y="162.7">Min</text><text x="171.9" y="162.7">0.0</text><text x="207.5" y="162.7">Avg</text><text x="249" y="162.7">0.0</text><text x="284.2" y="162.7">Max</text><text x="326.4" y="162.7">0.0</text><text x="361" y="162.7">Last</text><text x="410.2" y="162.7">0</text><text x="430.9" y="162.7">Total</text>
<text x="29.3" y="176.8">Write</text><text x="95.1" y="176.8">0.0</text><text x="130.2" y="176.8">Min</text><text x="171.9" y="176.8">7.5k</text><text x="207.5" y="176.8">Avg</text><text x="242.4" y="176.8">81.0k</text><text x="284.2" y="176.8">Max</text><text x="326.4" y="176.8">3.1k</text><text x="361" y="176.8">Last</text><text x="403.1" y="176.8">25M</text><text x="430.9" y="176.8">Total</text>
</g></g>
<rect x="15.500" y="154.800" width="8" height="8" fill="#0000ff" stroke="#000" stroke-width="1"/><rect x="15.500" y="168.800" width="8" height="8" fill="#00a000" stroke="#000" stroke-width="1"/>
</svg>
<div class="zb" style="top:2px;height:32px;width:34px"><svg width="16" height="16" viewBox="0 0 16 16" style="position:absolute;left:8px;top:7px"><ellipse cx="8" cy="14" rx="5" ry="0.800" fill="#bbb" opacity="0.700"/><circle cx="5.800" cy="5.800" r="4.200" fill="#e6f0f8" stroke="#9aa7b3" stroke-width="1.100"/><path d="M8.800,8.800 L13.600,13.200" stroke="#2a2a2a" stroke-width="2" stroke-linecap="round"/><path d="M3.800,5.800H7.800M5.800,3.800V7.800" stroke="#333" stroke-width="1"/></svg></div><div class="zb sel" style="top:38px;height:32px;width:34px"><svg width="16" height="16" viewBox="0 0 16 16" style="position:absolute;left:8px;top:7px"><ellipse cx="8" cy="14" rx="5" ry="0.800" fill="#bbb" opacity="0.700"/><circle cx="5.800" cy="5.800" r="4.200" fill="#e6f0f8" stroke="#9aa7b3" stroke-width="1.100"/><path d="M8.800,8.800 L13.600,13.200" stroke="#2a2a2a" stroke-width="2" stroke-linecap="round"/><path d="M3.800,5.800H7.800" stroke="#333" stroke-width="1.200"/></svg></div><div class="zb sel" style="top:74px;height:27px;width:34px;line-height:24px">&lt;&lt;</div><div class="zb" style="top:105px;height:27px;width:34px;line-height:24px">&gt;&gt;</div>
<svg class="g" style="top:187px" width="497" height="187" viewBox="0 0 497 187">
<rect x="0" y="0" width="497" height="187" fill="#f3f3f3"/>
<path d="M0,0H497V2H2V187H0Z" fill="#cbcbcb"/><path d="M497,0V187H0L2,185H495V2Z" fill="#9c9c9c"/>
<rect x="67" y="33" width="401" height="100" fill="#fff"/>
<path d="M72.5,32V134M85.5,32V134M112.5,32V134M125.5,32V134M139.5,32V134M152.5,32V134M179.5,32V134M192.5,32V134M205.5,32V134M219.5,32V134M245.5,32V134M259.5,32V134M272.5,32V134M285.5,32V134M312.5,32V134M325.5,32V134M339.5,32V134M352.5,32V134M379.5,32V134M392.5,32V134M405.5,32V134M419.5,32V134M445.5,32V134M459.5,32V134M66,127.5H468M66,122.5H468M66,116.5H468M66,105.5H468M66,100.5H468M66,94.5H468M66,83.5H468M66,77.5H468M66,72.5H468M66,61.5H468M66,55.5H468M66,50.5H468M66,39.5H468M66,33.5H468" stroke="#d2d2d2" stroke-width="1" stroke-dasharray="1 1" fill="none" shape-rendering="crispEdges"/>
<path d="M99.5,32V135M165.5,32V135M232.5,32V135M299.5,32V135M365.5,32V135M432.5,32V135M65,111.5H468M65,89.5H468M65,66.5H468M65,44.5H468" stroke="#f2b6b6" stroke-width="1" stroke-dasharray="1 1" fill="none" shape-rendering="crispEdges"/>
<path d="M67.5,133.5H68.5V111.5H69.5V133.5H72.5V131.5H74.5V111.5H75.5V133.5H79.5V131.5H81.5V111.5H82.5V133.5H88.5V111.5H89.5V133.5H90.5V111.5H91.5V133.5H92.5V109.5H93.5V110.5H95.5V133.5H98.5V107.5H99.5V133.5H100.5V109.5H102.5V133.5H103.5V131.5H105.5V107.5H106.5V133.5H108.5V107.5H109.5V133.5H112.5V131.5H114.5V107.5H115.5V133.5H117.5V131.5H119.5V107.5H120.5V112.5H123.5V133.5H128.5V112.5H129.5V133.5H131.5V131.5H132.5V112.5H133.5V133.5H134.5V109.5H135.5V133.5H139.5V131.5H141.5V109.5H142.5V133.5H148.5V106.5H149.5V113.5H150.5V133.5H152.5V131.5H154.5V112.5H155.5V133.5H156.5V112.5H158.5V133.5H159.5V131.5H161.5V112.5H162.5V133.5H163.5V131.5H165.5V111.5H166.5V133.5H168.5V109.5H169.5V133.5H171.5V131.5H172.5V109.5H173.5V133.5H174.5V109.5H176.5V133.5H179.5V131.5H181.5V107.5H182.5V133.5H188.5V107.5H189.5V133.5H190.5V109.5H192.5V67.5H193.5V133.5H194.5V109.5H195.5V133.5H197.5V131.5H199.5V111.5H200.5V133.5H201.5V112.5H202.5V133.5H208.5V113.5H209.5V133.5H213.5V131.5H215.5V113.5H216.5V133.5H220.5V131.5H222.5V106.5H223.5V110.5H224.5V133.5H227.5V131.5H229.5V109.5H230.5V133.5H231.5V131.5H232.5V109.5H233.5V133.5H234.5V131.5H235.5V109.5H236.5V133.5H240.5V131.5H242.5V109.5H243.5V133.5H247.5V131.5H249.5V109.5H250.5V133.5H251.5V131.5H252.5V109.5H253.5V133.5H254.5V131.5H255.5V106.5H256.5V133.5H257.5V109.5H259.5V133.5H260.5V131.5H262.5V109.5H263.5V133.5H264.5V131.5H265.5V86.5H266.5V133.5H267.5V131.5H269.5V85.5H270.5V133.5H273.5V131.5H275.5V109.5H276.5V133.5H280.5V131.5H282.5V107.5H283.5V133.5H287.5V131.5H289.5V104.5H290.5V133.5H291.5V109.5H292.5V133.5H293.5V131.5H295.5V107.5H296.5V133.5H297.5V131.5H299.5V107.5H300.5V133.5H301.5V131.5H302.5V107.5H303.5V133.5H304.5V131.5H305.5V107.5H306.5V133.5H307.5V131.5H309.5V112.5H310.5V133.5H313.5V131.5H315.5V112.5H316.5V133.5H320.5V131.5H322.5V109.5H323.5V133.5H324.5V110.5H325.5V133.5H328.5V124.5H329.5V43.5H330.5V133.5H331.5V131.5H332.5V112.5H333.5V133.5H334.5V131.5H335.5V112.5H336.5V133.5H340.5V131.5H342.5V109.5H343.5V133.5H347.5V131.5H349.5V109.5H350.5V133.5H353.5V131.5H355.5V105.5H356.5V133.5H357.5V111.5H358.5V133.5H360.5V131.5H362.5V112.5H363.5V133.5H364.5V131.5H365.5V111.5H366.5V133.5H367.5V131.5H369.5V110.5H370.5V133.5H371.5V127.5H372.5V83.5H373.5V133.5H374.5V131.5H375.5V105.5H376.5V133.5H380.5V131.5H382.5V107.5H383.5V133.5H387.5V131.5H389.5V104.5H390.5V85.5H391.5V133.5H393.5V131.5H395.5V110.5H396.5V133.5H398.5V126.5H399.5V70.5H400.5V133.5H401.5V131.5H402.5V110.5H403.5V133.5H407.5V131.5H409.5V110.5H410.5V133.5H411.5V131.5H412.5V110.5H413.5V133.5H414.5V131.5H415.5V105.5H416.5V133.5H420.5V131.5H422.5V102.5H423.5V133.5H424.5V106.5H425.5V133.5H427.5V131.5H429.5V110.5H430.5V133.5H431.5V131.5H432.5V110.5H433.5V133.5H434.5V131.5H435.5V110.5H436.5V133.5H440.5V131.5H442.5V105.5H444.5V133.5H445.5V99.5H446.5V67.5H447.5V100.5H449.5V65.5H450.5V133.5H451.5V134H67.5Z" fill="#bfe0cf" opacity="0.9"/>
<path d="M100,109 H103 V134 H100 ZM120,112 H124 V134 H120 ZM174,109 H177 V134 H174 ZM190,109 H193 V134 H190 ZM442,105 H445 V134 H442 Z" fill="#08a008" shape-rendering="crispEdges"/>
<path d="M67.5,133.5H68.5V111.5H69.5V133.5H72.5V131.5H74.5V111.5H75.5V133.5H79.5V131.5H81.5V111.5H82.5V133.5H88.5V111.5H89.5V133.5H90.5V111.5H91.5V133.5H92.5V109.5H93.5V110.5H95.5V133.5H98.5V107.5H99.5V133.5H100.5V109.5H102.5V133.5H103.5V131.5H105.5V107.5H106.5V133.5H108.5V107.5H109.5V133.5H112.5V131.5H114.5V107.5H115.5V133.5H117.5V131.5H119.5V107.5H120.5V112.5H123.5V133.5H128.5V112.5H129.5V133.5H131.5V131.5H132.5V112.5H133.5V133.5H134.5V109.5H135.5V133.5H139.5V131.5H141.5V109.5H142.5V133.5H148.5V106.5H149.5V113.5H150.5V133.5H152.5V131.5H154.5V112.5H155.5V133.5H156.5V112.5H158.5V133.5H159.5V131.5H161.5V112.5H162.5V133.5H163.5V131.5H165.5V111.5H166.5V133.5H168.5V109.5H169.5V133.5H171.5V131.5H172.5V109.5H173.5V133.5H174.5V109.5H176.5V133.5H179.5V131.5H181.5V107.5H182.5V133.5H188.5V107.5H189.5V133.5H190.5V109.5H192.5V67.5H193.5V133.5H194.5V109.5H195.5V133.5H197.5V131.5H199.5V111.5H200.5V133.5H201.5V112.5H202.5V133.5H208.5V113.5H209.5V133.5H213.5V131.5H215.5V113.5H216.5V133.5H220.5V131.5H222.5V106.5H223.5V110.5H224.5V133.5H227.5V131.5H229.5V109.5H230.5V133.5H231.5V131.5H232.5V109.5H233.5V133.5H234.5V131.5H235.5V109.5H236.5V133.5H240.5V131.5H242.5V109.5H243.5V133.5H247.5V131.5H249.5V109.5H250.5V133.5H251.5V131.5H252.5V109.5H253.5V133.5H254.5V131.5H255.5V106.5H256.5V133.5H257.5V109.5H259.5V133.5H260.5V131.5H262.5V109.5H263.5V133.5H264.5V131.5H265.5V86.5H266.5V133.5H267.5V131.5H269.5V85.5H270.5V133.5H273.5V131.5H275.5V109.5H276.5V133.5H280.5V131.5H282.5V107.5H283.5V133.5H287.5V131.5H289.5V104.5H290.5V133.5H291.5V109.5H292.5V133.5H293.5V131.5H295.5V107.5H296.5V133.5H297.5V131.5H299.5V107.5H300.5V133.5H301.5V131.5H302.5V107.5H303.5V133.5H304.5V131.5H305.5V107.5H306.5V133.5H307.5V131.5H309.5V112.5H310.5V133.5H313.5V131.5H315.5V112.5H316.5V133.5H320.5V131.5H322.5V109.5H323.5V133.5H324.5V110.5H325.5V133.5H328.5V124.5H329.5V43.5H330.5V133.5H331.5V131.5H332.5V112.5H333.5V133.5H334.5V131.5H335.5V112.5H336.5V133.5H340.5V131.5H342.5V109.5H343.5V133.5H347.5V131.5H349.5V109.5H350.5V133.5H353.5V131.5H355.5V105.5H356.5V133.5H357.5V111.5H358.5V133.5H360.5V131.5H362.5V112.5H363.5V133.5H364.5V131.5H365.5V111.5H366.5V133.5H367.5V131.5H369.5V110.5H370.5V133.5H371.5V127.5H372.5V83.5H373.5V133.5H374.5V131.5H375.5V105.5H376.5V133.5H380.5V131.5H382.5V107.5H383.5V133.5H387.5V131.5H389.5V104.5H390.5V85.5H391.5V133.5H393.5V131.5H395.5V110.5H396.5V133.5H398.5V126.5H399.5V70.5H400.5V133.5H401.5V131.5H402.5V110.5H403.5V133.5H407.5V131.5H409.5V110.5H410.5V133.5H411.5V131.5H412.5V110.5H413.5V133.5H414.5V131.5H415.5V105.5H416.5V133.5H420.5V131.5H422.5V102.5H423.5V133.5H424.5V106.5H425.5V133.5H427.5V131.5H429.5V110.5H430.5V133.5H431.5V131.5H432.5V110.5H433.5V133.5H434.5V131.5H435.5V110.5H436.5V133.5H440.5V131.5H442.5V105.5H444.5V133.5H445.5V99.5H446.5V67.5H447.5V100.5H449.5V65.5H450.5V133.5H451.5" fill="none" stroke="#08a008" stroke-width="1" stroke-linejoin="miter" shape-rendering="crispEdges"/>
<path d="M63,133.5H470" stroke="#2e2e22" stroke-width="1" shape-rendering="crispEdges"/><path d="M66.6,137V31" stroke="#3c3c3c" stroke-width="1.1"/>
<path d="M66.6,26.4 l-3,4.600 h6z" fill="#7d1414"/><path d="M474.2,133.4 l-5,-2.900 v5.800z" fill="#7d1414"/>
<path d="M69,133.5H69M73,133.5H75M80,133.5H82M89,133.5H89M91,133.5H91M93,133.5H95M99,133.5H99M101,133.5H102M104,133.5H106M109,133.5H109M113,133.5H115M118,133.5H123M129,133.5H129M132,133.5H133M135,133.5H135M140,133.5H142M149,133.5H150M153,133.5H155M157,133.5H158M160,133.5H162M164,133.5H166M169,133.5H169M172,133.5H173M175,133.5H176M180,133.5H182M189,133.5H189M191,133.5H193M195,133.5H195M198,133.5H200M202,133.5H202M209,133.5H209M214,133.5H216M221,133.5H224M228,133.5H230M232,133.5H233M235,133.5H236M241,133.5H243M248,133.5H250M252,133.5H253M255,133.5H256M258,133.5H259M261,133.5H263M265,133.5H266M268,133.5H270M274,133.5H276M281,133.5H283M288,133.5H290M292,133.5H292M294,133.5H296M298,133.5H300M302,133.5H303M305,133.5H306M308,133.5H310M314,133.5H316M321,133.5H323M325,133.5H325M329,133.5H330M332,133.5H333M335,133.5H336M341,133.5H343M348,133.5H350M354,133.5H356M358,133.5H358M361,133.5H363M365,133.5H366M368,133.5H370M372,133.5H373M375,133.5H376M381,133.5H383M388,133.5H391M394,133.5H396M399,133.5H400M402,133.5H403M408,133.5H410M412,133.5H413M415,133.5H416M421,133.5H423M425,133.5H425M428,133.5H430M432,133.5H433M435,133.5H436M441,133.5H444M446,133.5H450" stroke="#1414b8" stroke-width="1" fill="none" shape-rendering="crispEdges"/>
<g font-family="'DejaVu Sans Mono','Liberation Mono',monospace" fill="#000">
<text x="247.300" y="18" font-size="13.050" text-anchor="middle">Disk I/O (ada1)</text>
<g font-size="9.750"><text x="60.300" y="115.1" text-anchor="end">20 k</text><text x="60.300" y="92.9" text-anchor="end">40 k</text><text x="60.300" y="70.6" text-anchor="end">60 k</text><text x="60.300" y="48.4" text-anchor="end">80 k</text><text x="42.300" y="137.3">0</text><text x="100.3" y="144.600" text-anchor="middle">04:30</text><text x="167.0" y="144.600" text-anchor="middle">04:40</text><text x="233.6" y="144.600" text-anchor="middle">04:50</text><text x="300.3" y="144.600" text-anchor="middle">05:00</text><text x="367.0" y="144.600" text-anchor="middle">05:10</text><text x="433.6" y="144.600" text-anchor="middle">05:20</text></g>
<text font-size="11.850" text-anchor="middle" transform="translate(14.600,83) rotate(-90)">Bytes/s</text>
<text font-size="8.150" fill="#a8a8a8" transform="translate(484.500,5) rotate(90)">RRDTOOL / TOBI OETIKER</text>
<g font-size="11.330"><text x="29.9" y="162.7">Read</text><text x="95.1" y="162.7">0.0</text><text x="130.2" y="162.7">Min</text><text x="171.9" y="162.7">0.0</text><text x="207.5" y="162.7">Avg</text><text x="249" y="162.7">0.0</text><text x="284.2" y="162.7">Max</text><text x="326.4" y="162.7">0.0</text><text x="361" y="162.7">Last</text><text x="410.2" y="162.7">0</text><text x="430.9" y="162.7">Total</text>
<text x="29.3" y="176.8">Write</text><text x="95.1" y="176.8">0.0</text><text x="130.2" y="176.8">Min</text><text x="171.9" y="176.8">7.5k</text><text x="207.5" y="176.8">Avg</text><text x="242.4" y="176.8">81.0k</text><text x="284.2" y="176.8">Max</text><text x="326.4" y="176.8">3.1k</text><text x="361" y="176.8">Last</text><text x="403.1" y="176.8">25M</text><text x="430.9" y="176.8">Total</text>
</g></g>
<rect x="15.500" y="154.800" width="8" height="8" fill="#0000ff" stroke="#000" stroke-width="1"/><rect x="15.500" y="168.800" width="8" height="8" fill="#00a000" stroke="#000" stroke-width="1"/>
</svg>
<div class="zb" style="top:189px;height:32px;width:34px"><svg width="16" height="16" viewBox="0 0 16 16" style="position:absolute;left:8px;top:7px"><ellipse cx="8" cy="14" rx="5" ry="0.800" fill="#bbb" opacity="0.700"/><circle cx="5.800" cy="5.800" r="4.200" fill="#e6f0f8" stroke="#9aa7b3" stroke-width="1.100"/><path d="M8.800,8.800 L13.600,13.200" stroke="#2a2a2a" stroke-width="2" stroke-linecap="round"/><path d="M3.800,5.800H7.800M5.800,3.800V7.800" stroke="#333" stroke-width="1"/></svg></div><div class="zb sel" style="top:225px;height:32px;width:34px"><svg width="16" height="16" viewBox="0 0 16 16" style="position:absolute;left:8px;top:7px"><ellipse cx="8" cy="14" rx="5" ry="0.800" fill="#bbb" opacity="0.700"/><circle cx="5.800" cy="5.800" r="4.200" fill="#e6f0f8" stroke="#9aa7b3" stroke-width="1.100"/><path d="M8.800,8.800 L13.600,13.200" stroke="#2a2a2a" stroke-width="2" stroke-linecap="round"/><path d="M3.800,5.800H7.800" stroke="#333" stroke-width="1.200"/></svg></div><div class="zb sel" style="top:261px;height:27px;width:34px;line-height:24px">&lt;&lt;</div><div class="zb" style="top:292px;height:27px;width:34px;line-height:24px">&gt;&gt;</div>
<svg class="g" style="top:374px" width="497" height="187" viewBox="0 0 497 187">
<rect x="0" y="0" width="497" height="187" fill="#f3f3f3"/>
<path d="M0,0H497V2H2V187H0Z" fill="#cbcbcb"/><path d="M497,0V187H0L2,185H495V2Z" fill="#9c9c9c"/>
<rect x="67" y="33" width="401" height="100" fill="#fff"/>
<path d="M72.5,32V134M85.5,32V134M112.5,32V134M125.5,32V134M139.5,32V134M152.5,32V134M179.5,32V134M192.5,32V134M205.5,32V134M219.5,32V134M245.5,32V134M259.5,32V134M272.5,32V134M285.5,32V134M312.5,32V134M325.5,32V134M339.5,32V134M352.5,32V134M379.5,32V134M392.5,32V134M405.5,32V134M419.5,32V134M445.5,32V134M459.5,32V134M66,127.5H468M66,122.5H468M66,116.5H468M66,105.5H468M66,100.5H468M66,94.5H468M66,83.5H468M66,77.5H468M66,72.5H468M66,61.5H468M66,55.5H468M66,50.5H468M66,39.5H468M66,33.5H468" stroke="#d2d2d2" stroke-width="1" stroke-dasharray="1 1" fill="none" shape-rendering="crispEdges"/>
<path d="M99.5,32V135M165.5,32V135M232.5,32V135M299.5,32V135M365.5,32V135M432.5,32V135M65,111.5H468M65,89.5H468M65,66.5H468M65,44.5H468" stroke="#f2b6b6" stroke-width="1" stroke-dasharray="1 1" fill="none" shape-rendering="crispEdges"/>
<path d="M67.5,133.5H68.5V111.5H69.5V133.5H72.5V131.5H74.5V111.5H75.5V133.5H79.5V131.5H81.5V115.5H82.5V133.5H88.5V115.5H89.5V133.5H90.5V115.5H91.5V133.5H92.5V113.5H93.5V114.5H95.5V133.5H98.5V113.5H99.5V133.5H100.5V113.5H102.5V133.5H103.5V131.5H105.5V113.5H106.5V133.5H108.5V113.5H109.5V133.5H112.5V131.5H114.5V113.5H115.5V133.5H117.5V131.5H119.5V113.5H120.5V109.5H123.5V133.5H128.5V109.5H129.5V133.5H131.5V131.5H132.5V109.5H133.5V133.5H134.5V107.5H135.5V133.5H139.5V131.5H141.5V107.5H142.5V133.5H148.5V105.5H149.5V113.5H150.5V133.5H152.5V131.5H154.5V109.5H155.5V133.5H156.5V109.5H158.5V133.5H159.5V131.5H161.5V109.5H162.5V133.5H163.5V131.5H165.5V109.5H166.5V133.5H168.5V107.5H169.5V133.5H171.5V131.5H172.5V107.5H173.5V133.5H174.5V107.5H176.5V133.5H179.5V131.5H181.5V113.5H182.5V133.5H188.5V113.5H189.5V133.5H190.5V113.5H192.5V73.5H193.5V133.5H194.5V107.5H195.5V133.5H197.5V131.5H199.5V107.5H200.5V133.5H201.5V109.5H202.5V133.5H208.5V109.5H209.5V133.5H213.5V131.5H215.5V109.5H216.5V133.5H220.5V131.5H222.5V109.5H223.5V110.5H224.5V133.5H227.5V131.5H229.5V113.5H230.5V133.5H231.5V131.5H232.5V113.5H233.5V133.5H234.5V131.5H235.5V113.5H236.5V133.5H240.5V131.5H242.5V113.5H243.5V133.5H247.5V131.5H249.5V113.5H250.5V133.5H251.5V131.5H252.5V112.5H253.5V133.5H254.5V131.5H255.5V105.5H256.5V133.5H257.5V109.5H259.5V133.5H260.5V131.5H262.5V107.5H263.5V133.5H264.5V131.5H265.5V85.5H266.5V133.5H267.5V131.5H269.5V85.5H270.5V133.5H273.5V131.5H275.5V110.5H276.5V133.5H280.5V131.5H282.5V112.5H283.5V133.5H287.5V131.5H289.5V109.5H290.5V133.5H291.5V111.5H292.5V133.5H293.5V131.5H295.5V112.5H296.5V133.5H297.5V131.5H299.5V112.5H300.5V133.5H301.5V131.5H302.5V112.5H303.5V133.5H304.5V131.5H305.5V112.5H306.5V133.5H307.5V131.5H309.5V108.5H310.5V133.5H313.5V131.5H315.5V108.5H316.5V133.5H320.5V131.5H322.5V105.5H323.5V133.5H324.5V111.5H325.5V133.5H328.5V124.5H329.5V44.5H330.5V133.5H331.5V131.5H332.5V104.5H333.5V133.5H334.5V131.5H335.5V108.5H336.5V133.5H340.5V131.5H342.5V107.5H343.5V133.5H347.5V131.5H349.5V107.5H350.5V133.5H353.5V131.5H355.5V104.5H356.5V133.5H357.5V108.5H358.5V133.5H360.5V131.5H362.5V108.5H363.5V133.5H364.5V131.5H365.5V107.5H366.5V133.5H367.5V131.5H369.5V106.5H370.5V133.5H371.5V127.5H372.5V81.5H373.5V133.5H374.5V131.5H375.5V105.5H376.5V133.5H380.5V131.5H382.5V105.5H383.5V133.5H387.5V131.5H389.5V100.5H390.5V81.5H391.5V133.5H393.5V131.5H395.5V105.5H396.5V133.5H398.5V126.5H399.5V67.5H400.5V133.5H401.5V131.5H402.5V105.5H403.5V133.5H407.5V131.5H409.5V105.5H410.5V133.5H411.5V131.5H412.5V105.5H413.5V133.5H414.5V131.5H415.5V105.5H416.5V133.5H420.5V131.5H422.5V101.5H423.5V133.5H424.5V106.5H425.5V133.5H427.5V131.5H429.5V105.5H430.5V133.5H431.5V131.5H432.5V106.5H433.5V133.5H434.5V131.5H435.5V105.5H436.5V133.5H440.5V131.5H442.5V109.5H444.5V133.5H445.5V104.5H446.5V80.5H447.5V101.5H449.5V65.5H450.5V133.5H451.5V134H67.5Z" fill="#bfe0cf" opacity="0.9"/>
<path d="M100,113 H103 V134 H100 ZM120,109 H124 V134 H120 ZM174,107 H177 V134 H174 ZM190,113 H193 V134 H190 ZM442,109 H445 V134 H442 Z" fill="#08a008" shape-rendering="crispEdges"/>
<path d="M67.5,133.5H68.5V111.5H69.5V133.5H72.5V131.5H74.5V111.5H75.5V133.5H79.5V131.5H81.5V115.5H82.5V133.5H88.5V115.5H89.5V133.5H90.5V115.5H91.5V133.5H92.5V113.5H93.5V114.5H95.5V133.5H98.5V113.5H99.5V133.5H100.5V113.5H102.5V133.5H103.5V131.5H105.5V113.5H106.5V133.5H108.5V113.5H109.5V133.5H112.5V131.5H114.5V113.5H115.5V133.5H117.5V131.5H119.5V113.5H120.5V109.5H123.5V133.5H128.5V109.5H129.5V133.5H131.5V131.5H132.5V109.5H133.5V133.5H134.5V107.5H135.5V133.5H139.5V131.5H141.5V107.5H142.5V133.5H148.5V105.5H149.5V113.5H150.5V133.5H152.5V131.5H154.5V109.5H155.5V133.5H156.5V109.5H158.5V133.5H159.5V131.5H161.5V109.5H162.5V133.5H163.5V131.5H165.5V109.5H166.5V133.5H168.5V107.5H169.5V133.5H171.5V131.5H172.5V107.5H173.5V133.5H174.5V107.5H176.5V133.5H179.5V131.5H181.5V113.5H182.5V133.5H188.5V113.5H189.5V133.5H190.5V113.5H192.5V73.5H193.5V133.5H194.5V107.5H195.5V133.5H197.5V131.5H199.5V107.5H200.5V133.5H201.5V109.5H202.5V133.5H208.5V109.5H209.5V133.5H213.5V131.5H215.5V109.5H216.5V133.5H220.5V131.5H222.5V109.5H223.5V110.5H224.5V133.5H227.5V131.5H229.5V113.5H230.5V133.5H231.5V131.5H232.5V113.5H233.5V133.5H234.5V131.5H235.5V113.5H236.5V133.5H240.5V131.5H242.5V113.5H243.5V133.5H247.5V131.5H249.5V113.5H250.5V133.5H251.5V131.5H252.5V112.5H253.5V133.5H254.5V131.5H255.5V105.5H256.5V133.5H257.5V109.5H259.5V133.5H260.5V131.5H262.5V107.5H263.5V133.5H264.5V131.5H265.5V85.5H266.5V133.5H267.5V131.5H269.5V85.5H270.5V133.5H273.5V131.5H275.5V110.5H276.5V133.5H280.5V131.5H282.5V112.5H283.5V133.5H287.5V131.5H289.5V109.5H290.5V133.5H291.5V111.5H292.5V133.5H293.5V131.5H295.5V112.5H296.5V133.5H297.5V131.5H299.5V112.5H300.5V133.5H301.5V131.5H302.5V112.5H303.5V133.5H304.5V131.5H305.5V112.5H306.5V133.5H307.5V131.5H309.5V108.5H310.5V133.5H313.5V131.5H315.5V108.5H316.5V133.5H320.5V131.5H322.5V105.5H323.5V133.5H324.5V111.5H325.5V133.5H328.5V124.5H329.5V44.5H330.5V133.5H331.5V131.5H332.5V104.5H333.5V133.5H334.5V131.5H335.5V108.5H336.5V133.5H340.5V131.5H342.5V107.5H343.5V133.5H347.5V131.5H349.5V107.5H350.5V133.5H353.5V131.5H355.5V104.5H356.5V133.5H357.5V108.5H358.5V133.5H360.5V131.5H362.5V108.5H363.5V133.5H364.5V131.5H365.5V107.5H366.5V133.5H367.5V131.5H369.5V106.5H370.5V133.5H371.5V127.5H372.5V81.5H373.5V133.5H374.5V131.5H375.5V105.5H376.5V133.5H380.5V131.5H382.5V105.5H383.5V133.5H387.5V131.5H389.5V100.5H390.5V81.5H391.5V133.5H393.5V131.5H395.5V105.5H396.5V133.5H398.5V126.5H399.5V67.5H400.5V133.5H401.5V131.5H402.5V105.5H403.5V133.5H407.5V131.5H409.5V105.5H410.5V133.5H411.5V131.5H412.5V105.5H413.5V133.5H414.5V131.5H415.5V105.5H416.5V133.5H420.5V131.5H422.5V101.5H423.5V133.5H424.5V106.5H425.5V133.5H427.5V131.5H429.5V105.5H430.5V133.5H431.5V131.5H432.5V106.5H433.5V133.5H434.5V131.5H435.5V105.5H436.5V133.5H440.5V131.5H442.5V109.5H444.5V133.5H445.5V104.5H446.5V80.5H447.5V101.5H449.5V65.5H450.5V133.5H451.5" fill="none" stroke="#08a008" stroke-width="1" stroke-linejoin="miter" shape-rendering="crispEdges"/>
<path d="M63,133.5H470" stroke="#2e2e22" stroke-width="1" shape-rendering="crispEdges"/><path d="M66.6,137V31" stroke="#3c3c3c" stroke-width="1.1"/>
<path d="M66.6,26.4 l-3,4.600 h6z" fill="#7d1414"/><path d="M474.2,133.4 l-5,-2.900 v5.800z" fill="#7d1414"/>
<path d="M69,133.5H69M73,133.5H75M80,133.5H82M89,133.5H89M91,133.5H91M93,133.5H95M99,133.5H99M101,133.5H102M104,133.5H106M109,133.5H109M113,133.5H115M118,133.5H123M129,133.5H129M132,133.5H133M135,133.5H135M140,133.5H142M149,133.5H150M153,133.5H155M157,133.5H158M160,133.5H162M164,133.5H166M169,133.5H169M172,133.5H173M175,133.5H176M180,133.5H182M189,133.5H189M191,133.5H193M195,133.5H195M198,133.5H200M202,133.5H202M209,133.5H209M214,133.5H216M221,133.5H224M228,133.5H230M232,133.5H233M235,133.5H236M241,133.5H243M248,133.5H250M252,133.5H253M255,133.5H256M258,133.5H259M261,133.5H263M265,133.5H266M268,133.5H270M274,133.5H276M281,133.5H283M288,133.5H290M292,133.5H292M294,133.5H296M298,133.5H300M302,133.5H303M305,133.5H306M308,133.5H310M314,133.5H316M321,133.5H323M325,133.5H325M329,133.5H330M332,133.5H333M335,133.5H336M341,133.5H343M348,133.5H350M354,133.5H356M358,133.5H358M361,133.5H363M365,133.5H366M368,133.5H370M372,133.5H373M375,133.5H376M381,133.5H383M388,133.5H391M394,133.5H396M399,133.5H400M402,133.5H403M408,133.5H410M412,133.5H413M415,133.5H416M421,133.5H423M425,133.5H425M428,133.5H430M432,133.5H433M435,133.5H436M441,133.5H444M446,133.5H450" stroke="#1414b8" stroke-width="1" fill="none" shape-rendering="crispEdges"/>
<g font-family="'DejaVu Sans Mono','Liberation Mono',monospace" fill="#000">
<text x="247.300" y="18" font-size="13.050" text-anchor="middle">Disk I/O (ada2)</text>
<g font-size="9.750"><text x="60.300" y="115.1" text-anchor="end">20 k</text><text x="60.300" y="92.9" text-anchor="end">40 k</text><text x="60.300" y="70.6" text-anchor="end">60 k</text><text x="60.300" y="48.4" text-anchor="end">80 k</text><text x="42.300" y="137.3">0</text><text x="100.3" y="144.600" text-anchor="middle">04:30</text><text x="167.0" y="144.600" text-anchor="middle">04:40</text><text x="233.6" y="144.600" text-anchor="middle">04:50</text><text x="300.3" y="144.600" text-anchor="middle">05:00</text><text x="367.0" y="144.600" text-anchor="middle">05:10</text><text x="433.6" y="144.600" text-anchor="middle">05:20</text></g>
<text font-size="11.850" text-anchor="middle" transform="translate(14.600,83) rotate(-90)">Bytes/s</text>
<text font-size="8.150" fill="#a8a8a8" transform="translate(484.500,5) rotate(90)">RRDTOOL / TOBI OETIKER</text>
<g font-size="11.330"><text x="29.9" y="162.7">Read</text><text x="95.1" y="162.7">0.0</text><text x="130.2" y="162.7">Min</text><text x="171.9" y="162.7">0.0</text><text x="207.5" y="162.7">Avg</text><text x="249" y="162.7">0.0</text><text x="284.2" y="162.7">Max</text><text x="326.4" y="162.7">0.0</text><text x="361" y="162.7">Last</text><text x="410.2" y="162.7">0</text><text x="430.9" y="162.7">Total</text>
<text x="29.3" y="176.8">Write</text><text x="95.1" y="176.8">0.0</text><text x="130.2" y="176.8">Min</text><text x="171.9" y="176.8">7.5k</text><text x="207.5" y="176.8">Avg</text><text x="242.4" y="176.8">81.0k</text><text x="284.2" y="176.8">Max</text><text x="326.4" y="176.8">3.1k</text><text x="361" y="176.8">Last</text><text x="403.1" y="176.8">25M</text><text x="430.9" y="176.8">Total</text>
</g></g>
<rect x="15.500" y="154.800" width="8" height="8" fill="#0000ff" stroke="#000" stroke-width="1"/><rect x="15.500" y="168.800" width="8" height="8" fill="#00a000" stroke="#000" stroke-width="1"/>
</svg>
<div class="zb" style="top:376px;height:32px;width:34px"><svg width="16" height="16" viewBox="0 0 16 16" style="position:absolute;left:8px;top:7px"><ellipse cx="8" cy="14" rx="5" ry="0.800" fill="#bbb" opacity="0.700"/><circle cx="5.800" cy="5.800" r="4.200" fill="#e6f0f8" stroke="#9aa7b3" stroke-width="1.100"/><path d="M8.800,8.800 L13.600,13.200" stroke="#2a2a2a" stroke-width="2" stroke-linecap="round"/><path d="M3.800,5.800H7.800M5.800,3.800V7.800" stroke="#333" stroke-width="1"/></svg></div><div class="zb sel" style="top:412px;height:32px;width:34px"><svg width="16" height="16" viewBox="0 0 16 16" style="position:absolute;left:8px;top:7px"><ellipse cx="8" cy="14" rx="5" ry="0.800" fill="#bbb" opacity="0.700"/><circle cx="5.800" cy="5.800" r="4.200" fill="#e6f0f8" stroke="#9aa7b3" stroke-width="1.100"/><path d="M8.800,8.800 L13.600,13.200" stroke="#2a2a2a" stroke-width="2" stroke-linecap="round"/><path d="M3.800,5.800H7.800" stroke="#333" stroke-width="1.200"/></svg></div><div class="zb sel" style="top:448px;height:27px;width:34px;line-height:24px">&lt;&lt;</div><div class="zb" style="top:479px;height:27px;width:34px;line-height:24px">&gt;&gt;</div>
</div>
<div id="sb" class="abs"></div><div id="sbthumb" class="abs"></div>
<svg class="abs" style="left:1348px;top:185px" width="17" height="538"><path d="M5,11 L8.500,6.800 L12,11Z" fill="#a3a3a3"/><path d="M5,526 L8.500,530.200 L12,526Z" fill="#505050"/></svg>
<div id="ftr" class="abs"></div><div id="ftrline" class="abs"></div>
<div id="ftrtxt" class="abs">FreeNAS® © 2015 <b>iXsystems, Inc.</b></div>
<svg class="abs" style="left:1255px;top:730px" width="105" height="34" viewBox="0 0 105 34">
 <ellipse cx="18.300" cy="15" rx="14.500" ry="9.300" transform="rotate(-20 18.300 15)" fill="#0a95d8"/>
 <text x="10" y="21.500" font-family="'Liberation Sans','DejaVu Sans',sans-serif" font-size="16" fill="#fff">i</text>
 <text x="14.500" y="22" font-family="'Liberation Sans','DejaVu Sans',sans-serif" font-size="19" fill="#fff" textLength="12" lengthAdjust="spacingAndGlyphs">X</text>
 <text x="34" y="21.500" font-family="'Liberation Sans','DejaVu Sans',sans-serif" font-size="19" fill="#ececec" textLength="61" lengthAdjust="spacingAndGlyphs">systems</text>
 <text x="95.500" y="15" font-family="'Liberation Sans',sans-serif" font-size="4" fill="#ececec">™</text>
 <path d="M13.800,25.500 L24.800,5.500" stroke="#fff" stroke-width="1.200"/>
</svg>
</body>
</html>
